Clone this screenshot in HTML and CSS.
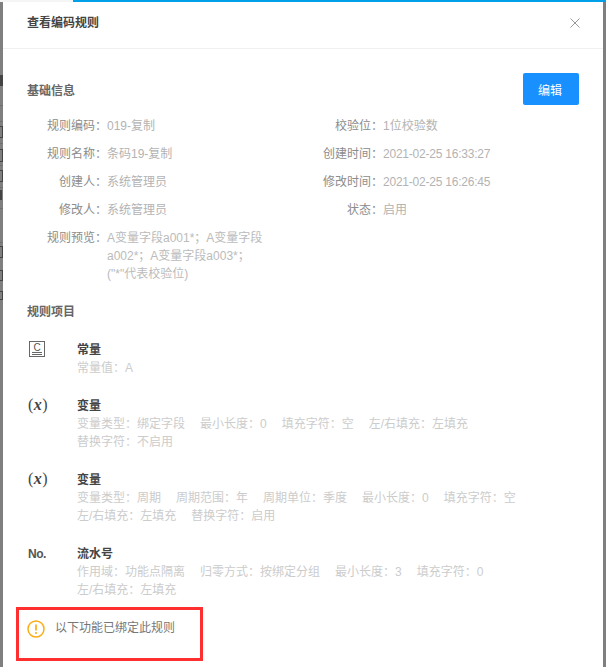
FILE: index.html
```html
<!DOCTYPE html>
<html lang="zh">
<head>
<meta charset="utf-8">
<title>查看编码规则</title>
<link rel="stylesheet" href="styles.css">
</head>
<body>
<div class="backdrop">
  <div class="mark m1"></div>
  <div class="line l1"></div>
  <div class="mark box m2"></div>
  <div class="line l2"></div>
  <div class="mark box m3"></div>
  <div class="line l3"></div>
  <div class="mark box m4"></div>
  <div class="line l4"></div>
  <div class="mark m5"></div>
  <div class="line l5"></div>
  <div class="line l6"></div>
  <div class="mark box m6"></div>
  <div class="line l7"></div>
  <div class="mark box m7"></div>
  <div class="mark box m8"></div>
</div>
<div class="topbar"><span class="topbar-left"></span><span class="topbar-right"></span></div>
<main class="modal">
  <header class="modal-head">
    <h1 class="modal-title">查看编码规则</h1>
    <svg class="close" width="10" height="10" viewBox="0 0 10 10"><path d="M.5.5l9 9M9.5.5l-9 9" stroke="#999" stroke-width="1" fill="none"/></svg>
  </header>
  <div class="modal-body">
    <div class="section-head">
      <h2 class="section-title basic-title">基础信息</h2>
      <button class="edit-btn">编辑</button>
    </div>
    <div class="info-grid">
      <div class="info-row"><span class="label">规则编码：</span><span class="value">019-复制</span></div>
      <div class="info-row right"><span class="label">校验位：</span><span class="value">1位校验数</span></div>
      <div class="info-row"><span class="label">规则名称：</span><span class="value">条码19-复制</span></div>
      <div class="info-row right"><span class="label">创建时间：</span><span class="value time">2021-02-25 16:33:27</span></div>
      <div class="info-row"><span class="label">创建人：</span><span class="value">系统管理员</span></div>
      <div class="info-row right"><span class="label">修改时间：</span><span class="value time">2021-02-25 16:26:45</span></div>
      <div class="info-row"><span class="label">修改人：</span><span class="value">系统管理员</span></div>
      <div class="info-row right"><span class="label">状态：</span><span class="value">启用</span></div>
      <div class="info-row preview"><span class="label">规则预览：</span><span class="value">A变量字段a001*；A变量字段a002*；A变量字段a003*；<br>("*"代表校验位)</span></div>
    </div>
    <h2 class="section-title items-title">规则项目</h2>
    <ul class="items">
      <li class="item">
        <span class="item-icon"><svg class="const-icon" width="17" height="17" viewBox="0 0 17 17"><rect x=".5" y=".5" width="15" height="15" fill="none" stroke="#666"/><path d="M3 11.5h10M3 13.5h10" stroke="#666" fill="none"/><text x="8" y="9.5" class="icon-c">C</text></svg></span>
        <div class="item-text"><h3 class="item-name">常量</h3><p class="item-meta"><span>常量值：A</span></p></div>
      </li>
      <li class="item">
        <span class="item-icon math"><span class="paren">(</span><i>x</i><span class="paren">)</span></span>
        <div class="item-text"><h3 class="item-name">变量</h3><p class="item-meta"><span>变量类型：绑定字段</span><span>最小长度：0</span><span>填充字符：空</span><span>左/右填充：左填充</span><span>替换字符：不启用</span></p></div>
      </li>
      <li class="item">
        <span class="item-icon math"><span class="paren">(</span><i>x</i><span class="paren">)</span></span>
        <div class="item-text"><h3 class="item-name">变量</h3><p class="item-meta"><span>变量类型：周期</span><span>周期范围：年</span><span>周期单位：季度</span><span>最小长度：0</span><span>填充字符：空</span><span>左/右填充：左填充</span><span>替换字符：启用</span></p></div>
      </li>
      <li class="item">
        <span class="item-icon no">No.</span>
        <div class="item-text"><h3 class="item-name">流水号</h3><p class="item-meta"><span>作用域：功能点隔离</span><span>归零方式：按绑定分组</span><span>最小长度：3</span><span>填充字符：0</span><span>左/右填充：左填充</span></p></div>
      </li>
    </ul>
    <div class="notice">
      <svg class="notice-icon" width="18" height="18" viewBox="0 0 18 18"><circle cx="9" cy="9" r="8" fill="none" stroke="#faad14" stroke-width="1.5"/><path d="M9 4.5v6" stroke="#faad14" stroke-width="1.7" fill="none"/><circle cx="9" cy="13" r="1" fill="#faad14"/></svg>
      <span>以下功能已绑定此规则</span>
    </div>
  </div>
</main>
</body>
</html>
```
FILE: styles.css
```css
* { box-sizing: border-box; }
html, body { margin: 0; height: 100%; }
body {
  width: 606px;
  height: 667px;
  overflow: hidden;
  position: relative;
  background: #7f7f7f;
  font-family: "Liberation Sans", "Noto Sans CJK SC", sans-serif;
  font-size: 12px;
  color: #8c8c8c;
}
h1, h2, h3, p, ul { margin: 0; padding: 0; }
ul { list-style: none; }

.backdrop { position: absolute; left: 0; top: 0; width: 3px; height: 300px; overflow: hidden; }
.mark, .line { position: absolute; left: 0; width: 3px; }
.mark { background: #444; }
.box { background: none; border: 1px solid #444; border-left: 0; }
.line { height: 1px; background: #6f6f6f; }
.m1 { top: 75px; height: 11px; }
.m2 { top: 126px; height: 12px; }
.m3 { top: 149px; height: 13px; }
.m4 { top: 170px; height: 12px; }
.m5 { top: 190px; width: 2px; height: 10px; }
.m6 { top: 246px; height: 12px; }
.m7 { top: 270px; height: 11px; }
.m8 { top: 291px; height: 9px; }
.l1 { top: 105px; }
.l2 { top: 121px; }
.l3 { top: 143px; }
.l4 { top: 165px; }
.l5 { top: 187px; }
.l6 { top: 208px; }
.l7 { top: 242px; }

.topbar { position: absolute; left: 0; top: 0; width: 606px; height: 2px; display: flex; z-index: 2; }
.topbar-left { width: 73px; background: #f5f5f5; }
.topbar-right { flex: 1; background: #00a0e9; }

.modal {
  position: absolute;
  left: 3px;
  top: 2px;
  width: 600px;
  height: 665px;
  background: #fff;
  overflow: hidden;
}
.modal-head {
  height: 47px;
  border-bottom: 1px solid #f0f0f0;
  display: flex;
  align-items: center;
  justify-content: space-between;
  padding: 0 23px 4px 24px;
}
.modal-title { font-size: 12px; font-weight: 700; color: #444; line-height: 20px; }
.close { display: block; }
.modal-body { padding: 24px 24px 0; }
.section-head { display: flex; justify-content: space-between; align-items: center; height: 32px; }
.section-title { font-size: 12px; font-weight: 700; color: #666; line-height: 18px; }
.basic-title { margin-top: 4px; }
.edit-btn {
  width: 56px;
  height: 32px;
  border: 0;
  border-radius: 2px;
  background: #1890ff;
  color: #fff;
  font: 12px "Liberation Sans", "Noto Sans CJK SC", sans-serif;
  padding: 0 2px 0 0;
}
.info-grid {
  display: grid;
  grid-template-columns: 260px 254px;
  grid-auto-rows: 28px;
  margin-top: 7px;
}
.info-row { display: flex; align-items: flex-start; line-height: 28px; }
.label { width: 80px; text-align: right; color: #8c8c8c; flex: none; }
.value { color: #b3b3b3; }
.time { letter-spacing: -.22px; }
.right .label { width: 96px; }
.preview { grid-column: 1; grid-row: span 2; line-height: 18px; padding-top: 5px; height: 64px; }
.preview .value { width: 160px; word-break: break-all; color: #bbb; }
.items-title { margin-top: 23px; }
.items { margin-top: 20px; }
.item { display: flex; margin-bottom: 20px; }
.item-icon { width: 50px; flex: none; color: #444; display: block; }
.const-icon { display: block; margin-left: 2px; width: 17px; height: 17px; }
.icon-c { font: 10px "Liberation Sans", sans-serif; fill: #555; text-anchor: middle; }
.math { font: 700 16px "Liberation Serif", serif; line-height: 15px; padding-left: 1px; letter-spacing: .5px; }
.paren { font-weight: 400; }
.no { font-size: 12px; font-weight: 700; color: #555; line-height: 18px; padding-left: 1px; letter-spacing: -.5px; }
.item-text { width: 450px; }
.item-name { font-size: 12px; font-weight: 700; color: #444; line-height: 18px; }
.item-meta { color: #ccc; line-height: 18px; width: 450px; display: flex; flex-wrap: wrap; column-gap: 15px; }
.notice {
  position: absolute;
  left: 13px;
  top: 605px;
  width: 187px;
  height: 54px;
  border: 3px solid #ff2f2f;
  display: flex;
  align-items: flex-start;
  gap: 10px;
  padding: 9px 0 0 8px;
  color: #777;
  line-height: 18px;
}
.notice-icon { display: block; margin-top: 1px; flex: none; }
```
